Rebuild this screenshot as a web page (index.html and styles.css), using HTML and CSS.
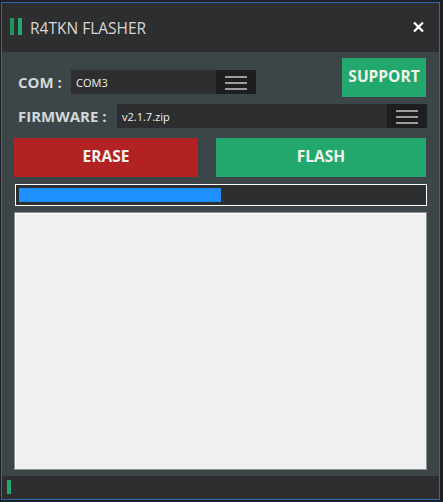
FILE: index.html
```html
<!DOCTYPE html>
<html>
<head>
<meta charset="utf-8">
<link rel="stylesheet" href="styles.css">
</head>
<body>
<div class="window">
  <div class="titlebar">
    <div class="logo"><span class="bar bar1"></span><span class="bar bar2"></span></div>
    <div class="title">R4TKN FLASHER</div>
    <svg class="close" width="11" height="10" viewBox="0 0 11 10"><path d="M1 0.5 L10 9.5 M10 0.5 L1 9.5" stroke="#ffffff" stroke-width="2.2" fill="none"/></svg>
  </div>
  <div class="content">
    <div class="row1">
      <div class="field com">
        <span class="label">COM :</span>
        <div class="input com-input"><span class="value">COM3</span></div>
        <div class="menu-btn"><span></span><span></span><span></span></div>
      </div>
      <div class="btn support">SUPPORT</div>
    </div>
    <div class="field fw">
      <span class="label">FIRMWARE :</span>
      <div class="input fw-input"><span class="value">v2.1.7.zip</span></div>
      <div class="menu-btn"><span></span><span></span><span></span></div>
    </div>
    <div class="actions">
      <div class="btn erase">ERASE</div>
      <div class="btn flash">FLASH</div>
    </div>
    <div class="progress"><div class="fill" style="width:50%"></div></div>
    <div class="log"></div>
  </div>
  <div class="statusbar"><span class="indicator"></span></div>
</div>
</body>
</html>
```
FILE: styles.css
```css
html, body {
  margin: 0;
  padding: 0;
  background: #1f2023;
}
body {
  font-family: "Open Sans", "Noto Sans", sans-serif;
}
.window {
  margin: 2px 0 0 1px;
  width: 437px;
  height: 496px;
  border: 1px solid #2a6bb0;
  display: flex;
  flex-direction: column;
  background: #3c4649;
}
.titlebar {
  height: 49px;
  background: #2d2e30;
  display: flex;
  align-items: center;
  padding-left: 8px;
  padding-right: 15px;
  box-sizing: border-box;
  flex: none;
}
.logo {
  display: flex;
  gap: 4px;
  height: 17px;
  margin-top: -2px;
}
.bar {
  width: 4px;
  height: 17px;
}
.bar1 { background: #239459; }
.bar2 { background: #22aa6c; }
.title {
  margin-left: 8px;
  color: #d8d8d8;
  font-size: 15.5px;
  flex: 1;
}
.close {
  display: block;
  margin-top: -2px;
}
.content {
  flex: 1;
  padding: 6px 12px 6px 12px;
  display: flex;
  flex-direction: column;
}
.row1 {
  display: flex;
  justify-content: space-between;
  height: 39px;
}
.field {
  display: flex;
  align-items: center;
  height: 24px;
}
.com {
  margin-top: 12px;
}
.label {
  font-weight: 700;
  font-size: 15px;
  color: #d2d8da;
  padding-left: 4px;
}
.com .label {
  width: 53px;
  flex: none;
}
.fw .label {
  width: 99px;
  flex: none;
}
.input {
  background: #2d2e30;
  height: 24px;
  display: flex;
  align-items: center;
  padding-left: 5px;
  box-sizing: border-box;
}
.com-input { width: 145px; }
.fw-input { flex: 1; }
.value {
  color: #f2f2f2;
  font-size: 11px;
}
.menu-btn {
  width: 40px;
  height: 24px;
  background: #1d1e20;
  display: flex;
  flex-direction: column;
  align-items: center;
  padding-top: 6px;
  gap: 4px;
  box-sizing: border-box;
  flex: none;
}
.menu-btn span {
  width: 22px;
  height: 2px;
  background: #9c9c9c;
}
.btn {
  display: flex;
  align-items: center;
  justify-content: center;
  color: #f3f3ee;
  font-weight: 700;
  font-size: 15.5px;
  padding-bottom: 3px;
  box-sizing: border-box;
}
.support {
  width: 84px;
  height: 39px;
  background: #22a86c;
  margin-right: 1px;
}
.fw {
  margin-top: 7px;
}
.actions {
  margin-top: 10px;
  display: flex;
  gap: 18px;
  height: 39px;
}
.erase {
  width: 184px;
  background: #b22222;
}
.flash {
  flex: 1;
  background: #22a86c;
  margin-right: 1px;
}
.progress {
  margin-top: 7px;
  margin-left: 1px;
  height: 22px;
  border: 1px solid #ffffff;
  background: #2d2e30;
  padding: 3px;
  box-sizing: border-box;
}
.fill {
  height: 14px;
  background: #1e90ff;
}
.log {
  margin-top: 6px;
  height: 258px;
  background: #f0f0f0;
  border: 1px solid #8f8f8f;
  box-shadow: inset 1px 1px 0 #ffffff;
  box-sizing: border-box;
}
.statusbar {
  height: 23px;
  background: #2d2e30;
  padding: 4px 0 0 5px;
  box-sizing: border-box;
  flex: none;
}
.indicator {
  display: block;
  width: 4px;
  height: 14px;
  background: #22aa6c;
}
```
